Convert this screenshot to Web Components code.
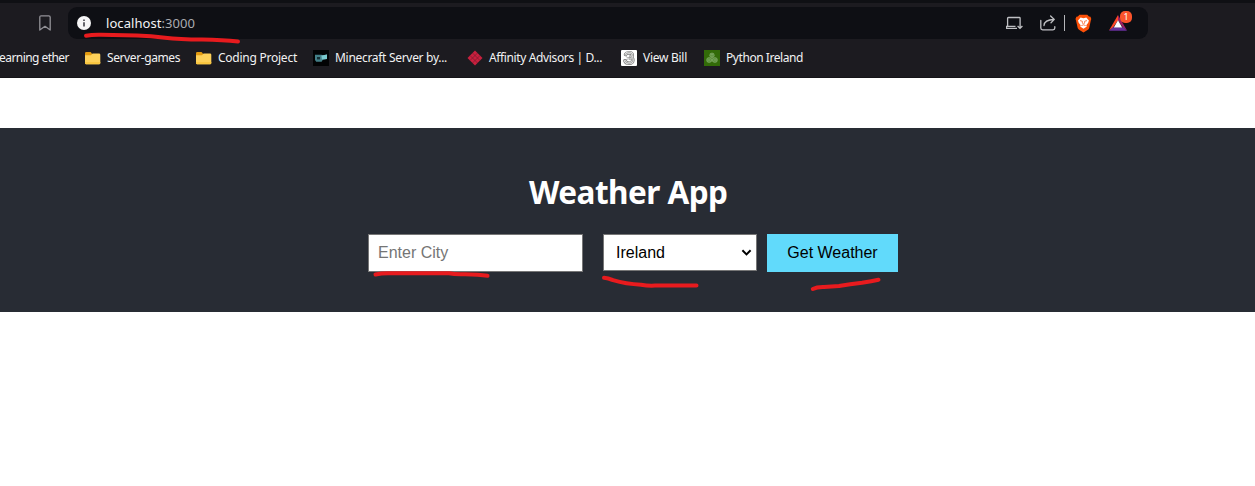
<!DOCTYPE html>
<html lang="en">
<head>
<meta charset="utf-8">
<title>Weather App</title>
<style>
html,body{margin:0;height:100%;background:#fff;overflow:hidden}
body{font-family:"Noto Sans","Open Sans",sans-serif}
</style>
</head>
<body>
<app-window></app-window>
<script>
const define = (name, html, setup) => customElements.define(name, class extends HTMLElement {
  constructor() { super(); this.attachShadow({mode: 'open'}).innerHTML = html; }
  connectedCallback() { if (setup) setup(this); }
});

/* A single line of text whose tracking is adjusted to a given width. */
customElements.define('fit-text', class extends HTMLElement {
  connectedCallback() {
    if (this.shadowRoot) return;
    this.attachShadow({mode: 'open'}).innerHTML =
      `<style>:host{display:block;white-space:pre}span{display:inline-block}</style><span></span>`;
    const s = this.shadowRoot.querySelector('span');
    s.innerHTML = this.getAttribute('markup') || this.getAttribute('text');
    const w = +this.getAttribute('w');
    this.style.width = w + 'px';
    const gap = (w - s.getBoundingClientRect().width) / s.textContent.length;
    s.style.letterSpacing = gap + 'px';
  }
});

const icons = {
  folder: `<path d="M0 2.2Q0 1 1.2 1H5.5L7 2.6V6H0z" fill="#e29a10"/><path d="M0 4.2L6 4.2 7.5 2.5H14Q15.3 2.5 15.3 3.8V12Q15.3 13.2 14 13.2H1.2Q0 13.2 0 12z" fill="#fdd059"/><path d="M0 11V12Q0 13.2 1.2 13.2H14Q15.3 13.2 15.3 12V11" fill="#f9c640"/>`,
  minecraft: `<path d="M0 0H16V16H0z" fill="#020304"/><path d="M2 4.8H8.5L10 5.5 13.9 4.6V8.9L9.8 9.7 8.6 11.8H3.2L2 10z" fill="#437f87"/><path d="M4 7H7V9.4H4z" fill="#142f35"/><path d="M8.4 5.4L14 4.6V8.9L8.9 9.4z" fill="#7ac8cd"/>`,
  affinity: `<path d="M8 .5L15.5 8 8 15.5.5 8z" fill="#c8203e"/><path d="M5.5 3L13 10.5M3 5.5L10.5 13M10.5 3L3 10.5M13 5.5L5.5 13" stroke="#6b1a2c" stroke-width=".6"/>`,
  three: `<rect width="16" height="16" rx="1" fill="#fff"/><g fill="none" stroke-linecap="round"><path d="M4.6 4.4Q5.6 2.7 8 2.7C12.2 2.8 12.2 6.6 8.6 7.3 13.2 7.6 12.8 13.2 8 13.2Q4.8 13.1 4 10.8" stroke="#777" stroke-width="3.6"/><path d="M4.6 4.4Q5.6 2.7 8 2.7C12.2 2.8 12.2 6.6 8.6 7.3 13.2 7.6 12.8 13.2 8 13.2Q4.8 13.1 4 10.8" stroke="#e5e5e5" stroke-width="2.2"/><path d="M4.6 4.4Q5.6 2.7 8 2.7C12.2 2.8 12.2 6.6 8.6 7.3 13.2 7.6 12.8 13.2 8 13.2Q4.8 13.1 4 10.8M5.2 6.8Q6.5 8.4 8.6 7.3M5.5 9.3Q7.5 8 9.2 9.6" stroke="#888" stroke-width=".7"/></g>`,
  python: `<path d="M0 0H16V16H0z" fill="#326b08"/><g fill="#5f9440" stroke="#90b77a" stroke-width=".5"><circle cx="8" cy="5.3" r="2.3"/><circle cx="5.1" cy="10" r="2.5"/><circle cx="10.9" cy="10" r="2.5"/><path d="M6.7 4.7H9M8 6V12M3.5 10H6M10 10H12.6" fill="none"/></g>`
};

define('info-icon', `<style>:host{display:block;width:14px;height:14px}svg{display:block}</style>
<svg width="14" height="14"><circle cx="7" cy="7" r="7" fill="#f6f6f7"/><path d="M6.1 6.2H7.9V10.5H6.1zM6.1 3.4H7.9V5H6.1z" fill="#55555b"/></svg>`);

define('bookmark-icon', `<style>:host{display:block;width:12px;height:16px}svg{display:block}</style>
<svg width="12" height="16" fill="none" stroke="#929197" stroke-width="1.3" stroke-linejoin="round"><path d="M.8 2.2Q.8.8 2.2.8H9.8Q11.2.8 11.2 2.2V15L6 11.3.8 15z"/></svg>`);

define('install-icon', `<style>:host{display:block;width:18px;height:14px}svg{display:block}</style>
<svg width="18" height="14" fill="none" stroke="#bfc0c3" stroke-width="1.3"><path d="M11 12.4H.6V10.4H9.5M1.6 10.4V2.3Q1.6 1.5 2.4 1.5H13.3Q14.1 1.5 14.1 2.3V12.4M11.6 10L14 12.4 16.4 10"/></svg>`);

define('share-icon', `<style>:host{display:block;width:17px;height:16px}svg{display:block}</style>
<svg width="17" height="16" fill="none" stroke="#bfc0c3" stroke-width="1.3" stroke-linecap="round" stroke-linejoin="round"><path d="M.8 5.5V13Q.8 14.8 2.6 14.8H13Q14.8 14.8 14.8 13V11.7M4 10.5Q4.5 4.7 13.8 4.5M10.6 1L14.3 4.4 11 7.8"/></svg>`);

define('brave-icon', `<style>:host{display:block;width:17px;height:19px}svg{display:block}</style>
<svg width="17" height="19"><path d="M4.5.8H12.3L14 2.6 15.5 2.8 16.3 5 15.8 6.4 14.2 14Q13.8 15.3 12.5 16L8.5 18.6 4.4 16Q3 15.2 2.7 14L1 6.4.5 5 1.4 2.8 2.8 2.6z" fill="#fb5008"/><path d="M5.6 3.6L8.5 4.2 11.3 3.6 13.9 6.4 13.2 8.8 11.3 11.3 11.8 12.5 8.5 14.8 5.2 12.5 5.7 11.3 3.7 8.8 3 6.4z" fill="#fff"/><path d="M5 6.6L7.3 7.2 7.4 9 8.5 10.2 9.6 9 9.7 7.2 12 6.6M6.3 11.6L8.5 10.9 10.7 11.6" fill="none" stroke="#f56429" stroke-width=".8"/></svg>`);

define('rewards-icon', `<style>:host{display:block;position:relative;width:18px;height:16px}svg{display:block}
b{position:absolute;left:11px;top:-4px;width:12px;height:12px;border-radius:5px;background:#fb542b;color:#fff;font:9px/12px "Noto Sans",sans-serif;text-align:center}</style>
<svg width="18" height="16"><path d="M9 0L0 15.5 3.8 13 9 5.2z" fill="#ff4826"/><path d="M9 0L18 15.5 14.2 13 9 5.2z" fill="#9d2064"/><path d="M0 15.7H18L14.2 12.3H3.8z" fill="#67319b"/><path d="M9 5.2L13.2 12.4H4.8z" fill="#fff"/></svg><b>1</b>`);

define('book-mark', `<style>:host{display:flex;align-items:center;height:20px;color:#f2f2f3;font-size:12px;line-height:20px}
svg{display:block;width:16px;height:16px;margin-right:6px;flex:none}</style><slot></slot>`, el => {
  const name = el.getAttribute('icon');
  if (name) el.shadowRoot.querySelector('slot').insertAdjacentHTML('beforebegin',
    `<svg viewBox="${name === 'folder' ? '0 -1 16 16' : '0 0 16 16'}">${icons[name]}</svg>`);
});

define('browser-chrome', `<style>
:host{display:block;height:78px;box-sizing:border-box;border-top:3px solid #0f1014;border-bottom:1px solid #151418;background:#1c1b20;overflow:hidden}
.bar{display:flex;align-items:center;padding-top:4px;height:32px}
bookmark-icon{margin:0 17px 0 39px}
.field{display:flex;align-items:center;box-sizing:border-box;width:1080px;height:32px;padding:0 21px 0 9px;border-radius:9px;background:#0e0f14}
.field fit-text{margin-left:15px;font-size:13px;line-height:20px;color:#f3f3f5}
install-icon{margin-left:auto}
share-icon{margin-left:16px}
i{width:1px;height:16px;background:#b5b6ba;margin:0 11px 0 7px}
brave-icon{margin-left:-1px}
rewards-icon{margin-left:17px}
.marks{display:flex;margin-top:9px}
.marks book-mark{margin-right:16px;flex:none}
</style>
<div class="bar"><bookmark-icon></bookmark-icon><div class="field"><info-icon></info-icon>
<fit-text w="89" markup="localhost&lt;span style='color:#aaabb0'&gt;:3000&lt;/span&gt;"></fit-text>
<install-icon></install-icon><share-icon></share-icon><i></i><brave-icon></brave-icon><rewards-icon></rewards-icon></div></div>
<div class="marks">
<book-mark style="margin-left:-1px"><fit-text w="70" text="earning ether"></fit-text></book-mark>
<book-mark icon="folder"><fit-text w="73" text="Server-games"></fit-text></book-mark>
<book-mark icon="folder"><fit-text w="79" text="Coding Project"></fit-text></book-mark>
<book-mark icon="minecraft" style="margin-right:20px"><fit-text w="112" text="Minecraft Server by..."></fit-text></book-mark>
<book-mark icon="affinity" style="margin-right:19px"><fit-text w="113" text="Affinity Advisors | D..."></fit-text></book-mark>
<book-mark icon="three" style="margin-right:17px"><fit-text w="44" text="View Bill"></fit-text></book-mark>
<book-mark icon="python"><fit-text w="77" text="Python Ireland"></fit-text></book-mark>
</div>`);

define('city-input', `<style>:host{display:block}input{display:block;box-sizing:border-box;width:215px;height:38px;padding:0 9px;border:1px solid #767676;border-radius:0;outline:0;background:#fff;font:16px "Liberation Sans",Arial,sans-serif}input::placeholder{color:#757575}</style><input placeholder="Enter City">`);

define('country-select', `<style>:host{display:flex;align-items:center;justify-content:space-between;box-sizing:border-box;width:154px;height:37px;padding:0 4px 0 12px;border:1px solid #767676;background:#fff;color:#000;font:16px "Liberation Sans",Arial,sans-serif}</style><slot></slot><svg width="11" height="8" fill="none" stroke="#000" stroke-width="2"><path d="M1.4 1.3L5.5 5.4 9.6 1.3"/></svg>`);

define('action-button', `<style>:host{display:block}button{display:block;width:131px;height:38px;padding:0;border:0;background:#61dafb;color:#000;font:16px "Liberation Sans",Arial,sans-serif}</style><button><slot></slot></button>`);

define('weather-app', `<style>
:host{display:block;box-sizing:border-box;height:184px;margin-top:50px;background:#282c34}
h1{display:flex;margin:0;padding:43px 0 0 529px;height:63px;box-sizing:content-box;font:bold 31.5px/42px "Noto Sans","Open Sans",sans-serif;color:#fff}
form{display:flex;align-items:flex-start;margin-left:368px}
country-select{margin:0 10px 0 20px}
</style><h1><fit-text w="198.5" text="Weather App"></fit-text></h1>
<form><city-input></city-input><country-select>Ireland</country-select><action-button>Get Weather</action-button></form>`);

/* Freehand red pen strokes lying over the page. */
define('pen-marks', `<style>:host{position:absolute;left:0;top:0;pointer-events:none}svg{display:block}</style>
<svg width="1255" height="486" viewBox="0 0 1255 486" fill="none" stroke="#e81b1e" stroke-width="4" stroke-linecap="round" stroke-linejoin="round">
<path d="M86 35.7Q92 34.6 101 34.8L137 35.5Q151 36 165 37.7T202 39.5Q223 40 238 41.5"/>
<path d="M375.5 274.5Q382 273 390 273.2H449Q454 274.3 462 274.2Q478 274 487.5 275.8"/>
<path d="M604 277.8Q608 278 613 280.2Q626 284.2 641 284.7Q648 286 655 285.6H696.5"/>
<path d="M812.8 289Q817 286.8 824 287L839 286Q850 284 862 282.8Q872 281.3 878.5 279.8"/></svg>`);

define('app-window', `<style>:host{display:block;position:relative;width:1255px;height:486px;overflow:hidden}</style>
<browser-chrome></browser-chrome><weather-app></weather-app><pen-marks></pen-marks>`);
</script>
</body>
</html>
